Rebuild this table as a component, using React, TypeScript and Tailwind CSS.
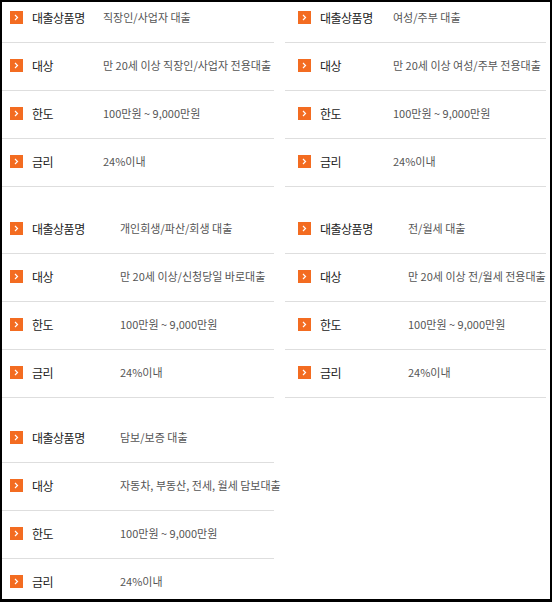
import React from 'react';

type Row = { label: string; value: string };

interface Block {
  rows: Row[];
  labelW: number;
}

const font = { fontFamily: '"Noto Sans CJK KR", "Noto Sans", sans-serif' };

function Chevron() {
  return (
    <span className="flex h-[13px] w-[13px] shrink-0 items-center justify-center bg-[#f36c21]">
      <svg width="5" height="7" viewBox="0 0 5 7">
        <path d="M1 1 L3.5 3.5 L1 6" fill="none" stroke="#fff" strokeWidth="1.2" />
      </svg>
    </span>
  );
}

function LoanTable({ rows, labelW, pad }: Block & { pad: string }) {
  return (
    <div className="flex flex-col">
      {rows.map((row) => (
        <div key={row.label} className={`flex h-[48px] items-center border-b border-[#dedede] pb-[2px] ${pad}`}>
          <Chevron />
          <span
            className="ml-[9px] shrink-0 text-[12px] tracking-[-0.5px] text-[#222]"
            style={{ width: labelW }}
          >
            {row.label}
          </span>
          <span className="whitespace-nowrap text-[11px] tracking-normal text-[#555]">{row.value}</span>
        </div>
      ))}
    </div>
  );
}

const info = (name: string, target: string): Row[] => [
  { label: '대출상품명', value: name },
  { label: '대상', value: target },
  { label: '한도', value: '100만원 ~ 9,000만원' },
  { label: '금리', value: '24%이내' },
];

export default function App() {
  return (
    <div className="h-[602px] w-[552px] overflow-hidden border-b-[3px] border-l-2 border-r-2 border-t-2 border-black bg-white" style={font}>
      <div className="-mt-[7px] grid grid-cols-[272px_261px] gap-x-[11px]">
        <LoanTable rows={info('직장인/사업자 대출', '만 20세 이상 직장인/사업자 전용대출')} labelW={71} pad="pl-[8px]" />
        <LoanTable rows={info('여성/주부 대출', '만 20세 이상 여성/주부 전용대출')} labelW={73} pad="pl-[13px]" />
        <div className="mt-[19px]">
          <LoanTable rows={info('개인회생/파산/회생 대출', '만 20세 이상/신청당일 바로대출')} labelW={88} pad="pl-[8px]" />
        </div>
        <div className="mt-[19px]">
          <LoanTable rows={info('전/월세 대출', '만 20세 이상 전/월세 전용대출')} labelW={88} pad="pl-[13px]" />
        </div>
        <div className="mt-[17px]">
          <LoanTable rows={info('담보/보증 대출', '자동차, 부동산, 전세, 월세 담보대출')} labelW={88} pad="pl-[8px]" />
        </div>
      </div>
    </div>
  );
}
